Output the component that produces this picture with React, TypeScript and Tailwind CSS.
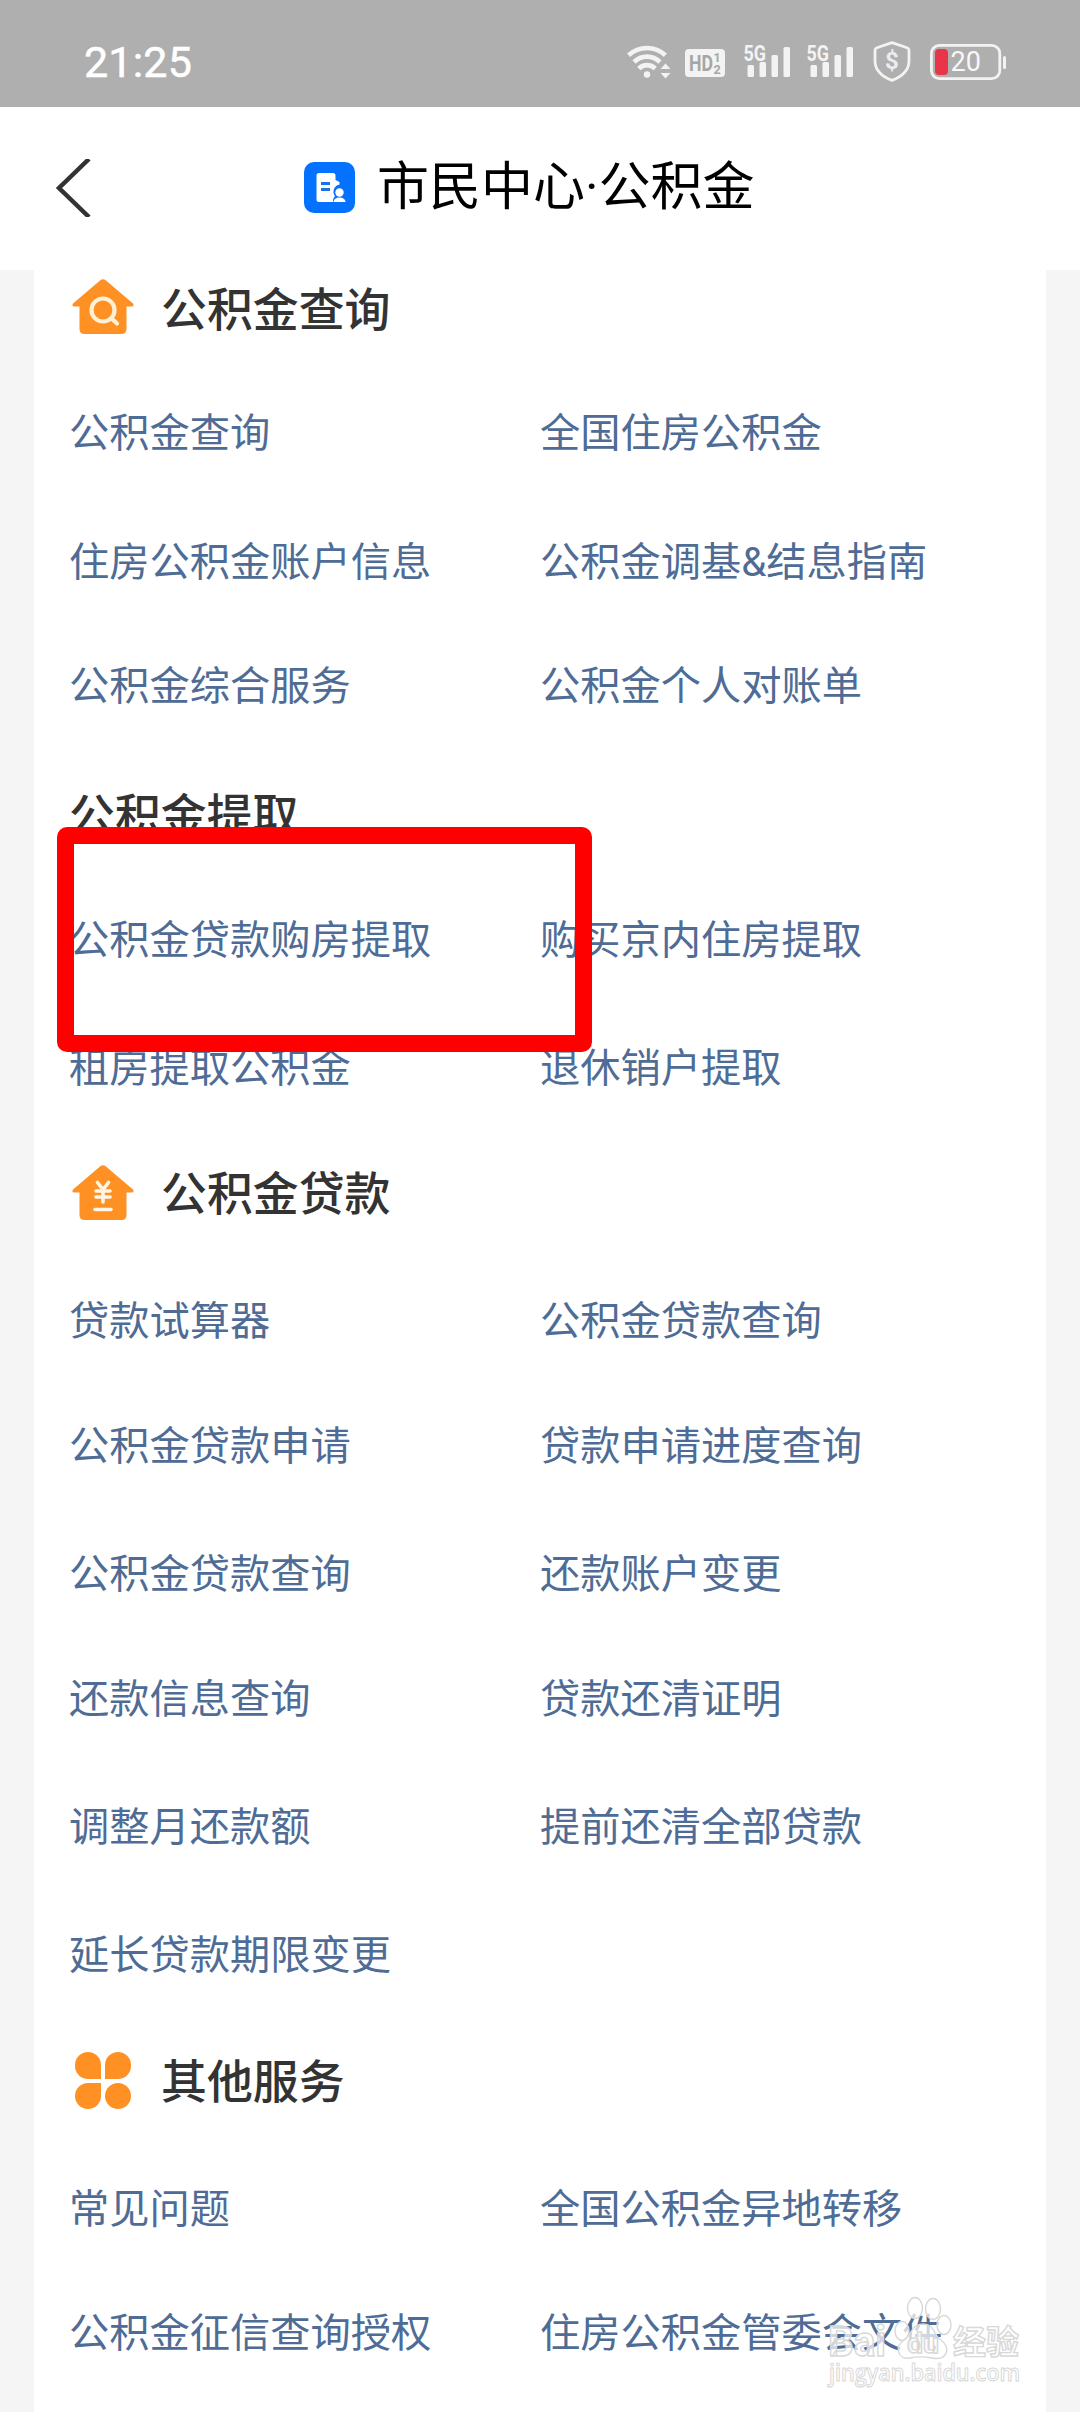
import type { ReactNode } from 'react'

type Row = {
  gap: string
  left: string
  right?: string
}

type SectionProps = {
  title: string
  gap: string
  icon?: ReactNode
  rows: Row[]
}

const queryRows: Row[] = [
  { gap: 'mt-[63px]', left: '公积金查询', right: '全国住房公积金' },
  { gap: 'mt-[69px]', left: '住房公积金账户信息', right: '公积金调基&结息指南' },
  { gap: 'mt-[64px]', left: '公积金综合服务', right: '公积金个人对账单' },
]

const withdrawRows: Row[] = [
  { gap: 'mt-[64px]', left: '公积金贷款购房提取', right: '购买京内住房提取' },
  { gap: 'mt-[68px]', left: '租房提取公积金', right: '退休销户提取' },
]

const loanRows: Row[] = [
  { gap: 'mt-[67px]', left: '贷款试算器', right: '公积金贷款查询' },
  { gap: 'mt-[65px]', left: '公积金贷款申请', right: '贷款申请进度查询' },
  { gap: 'mt-[68px]', left: '公积金贷款查询', right: '还款账户变更' },
  { gap: 'mt-[65px]', left: '还款信息查询', right: '贷款还清证明' },
  { gap: 'mt-[68px]', left: '调整月还款额', right: '提前还清全部贷款' },
  { gap: 'mt-[68px]', left: '延长贷款期限变更' },
]

const otherRows: Row[] = [
  { gap: 'mt-[67px]', left: '常见问题', right: '全国公积金异地转移' },
  { gap: 'mt-[64px]', left: '公积金征信查询授权', right: '住房公积金管委会文件' },
]

const HOUSE = 'M28 1.5 Q31 -1 34 1.5 L61 24.5 Q62.5 27.5 60 27.5 H54.5 V50 Q54.5 55 49.5 55 H12.5 Q7.5 55 7.5 50 V27.5 H2 Q-0.5 27.5 1 24.5 Z'

function HouseSearchIcon() {
  return (
    <svg className="-mt-[4px]" width="62" height="55" viewBox="0 0 62 55" fill="none">
      <path d={HOUSE} fill="#ff9124" />
      <circle cx="31" cy="31" r="11.5" stroke="#fff1d6" strokeWidth="4.2" />
      <path d="M39.5 39.5 L45 44.5" stroke="#fff1d6" strokeWidth="4.2" strokeLinecap="round" />
    </svg>
  )
}

function HouseYuanIcon() {
  return (
    <svg className="mt-[1px]" width="62" height="55" viewBox="0 0 62 55" fill="none">
      <path d={HOUSE} fill="#ff9124" />
      <g stroke="#fff6e6" strokeWidth="3.6" strokeLinecap="round">
        <path d="M25.5 17.5 L31 24.5 L36.5 17.5" />
        <path d="M24 26 H38 M24 32 H38 M31 25 V37" />
        <path d="M23 44.5 H39" />
      </g>
    </svg>
  )
}

function CloverIcon() {
  return (
    <div className="grid grid-cols-2 gap-1 mx-[3px] mt-[1px]">
      <div className="w-[26px] h-[26.5px] bg-[#ff9124] rounded-full rounded-br-[2px]"></div>
      <div className="w-[26px] h-[26.5px] bg-[#ff9124] rounded-full rounded-bl-[2px]"></div>
      <div className="w-[26px] h-[26.5px] bg-[#ff9124] rounded-full rounded-tr-[2px]"></div>
      <div className="w-[26px] h-[26.5px] bg-[#ff9124] rounded-full"></div>
    </div>
  )
}

function SignalIcon() {
  return (
    <svg className="overflow-visible" width="47" height="34" viewBox="0 0 47 34" fill="#f3f3f3">
      <text x="-0.5" y="16.5" fontSize="22" fontWeight="700" textLength="22.5" lengthAdjust="spacingAndGlyphs">
        5G
      </text>
      <rect x="3.5" y="21" width="6.5" height="12" rx="1.5" />
      <rect x="15.5" y="18" width="6.5" height="15" rx="1.5" />
      <rect x="27.5" y="11" width="6.5" height="22" rx="1.5" />
      <rect x="39.5" y="3" width="6.5" height="30" rx="1.5" />
    </svg>
  )
}

function StatusBar() {
  return (
    <div className="h-[107px] bg-[#afafaf] flex items-start justify-between pl-[84px] pr-[74px]">
      <span className="mt-[37px] text-[43px] leading-[50px] tracking-[0.2px] text-white [-webkit-text-stroke:0.5px_white]">21:25</span>
      <div className="flex items-start">
        <svg className="mt-[43px]" width="46" height="37" viewBox="0 0 46 37" fill="none">
          <g stroke="#f3f3f3" strokeWidth="4.6">
            <path d="M2.6 12.2 A27 27 0 0 1 39.4 12.2" />
            <path d="M8 19 A18.5 18.5 0 0 1 34 19" />
            <path d="M12.8 25.6 A11.5 11.5 0 0 1 29.2 25.6" />
          </g>
          <circle cx="21" cy="31.5" r="3.2" fill="#f3f3f3" />
          <path d="M39.5 20.5 L44.5 26 H34.5 Z M39.5 35.5 L34.5 30 H44.5 Z" fill="#f3f3f3" />
        </svg>
        <svg className="mt-[49px] ml-[13px]" width="40" height="28" viewBox="0 0 40 28">
          <rect width="40" height="28" rx="4" fill="#f3f3f3" />
          <g fill="#a6a6a6" fontWeight="700">
            <text x="4" y="22" fontSize="22" textLength="24" lengthAdjust="spacingAndGlyphs">HD</text>
            <text x="28.5" y="13" fontSize="12.5">1</text>
            <text x="28.5" y="24.5" fontSize="12.5">2</text>
          </g>
        </svg>
        <div className="mt-[44px] ml-[19px] flex gap-[16px]">
          <SignalIcon />
          <SignalIcon />
        </div>
        <svg className="mt-[41px] ml-[19px]" width="38" height="41" viewBox="0 0 38 41">
          <path
            d="M19 1.6 L34 6.8 Q36 7.6 36 9.6 V20 C36 29 29 35.5 19 39.4 C9 35.5 2 29 2 20 V9.6 Q2 7.6 4 6.8 Z"
            fill="none"
            stroke="#f3f3f3"
            strokeWidth="2.8"
            strokeLinejoin="round"
          />
          <text x="19" y="28" fontSize="24" fontWeight="700" textAnchor="middle" fill="#ececec">$</text>
        </svg>
        <svg className="mt-[44px] ml-[19px]" width="76" height="36" viewBox="0 0 76 36">
          <rect x="1.4" y="1.4" width="68.4" height="33.2" rx="8" fill="none" stroke="#f3f3f3" strokeWidth="2.8" />
          <rect x="5" y="5" width="13" height="26" rx="4" fill="#ea3548" />
          <rect x="73" y="12" width="3" height="13" rx="1.5" fill="#f3f3f3" />
          <text x="20.5" y="27" fontSize="27" fill="#f7f7f7">20</text>
        </svg>
      </div>
    </div>
  )
}

function Header() {
  return (
    <header className="h-[163px] bg-white flex items-center">
      <svg className="ml-[55px] -mt-[2px]" width="37" height="58" viewBox="0 0 37 58" fill="none">
        <path d="M34 0 L4 29 L34 58" stroke="#333" strokeWidth="4.5" />
      </svg>
      <svg className="ml-[211.5px] -mt-[2px]" width="51" height="51" viewBox="0 0 51 51">
        <rect width="51" height="51" rx="10" fill="#0571ff" />
        <path
          d="M15 11 H29 Q31.5 11 31.5 13.5 V18 L35.5 20 V22.5 Q29 24 29.5 31 Q30 33 31 34 Q29 36 29 40 H15 Q12.5 40 12.5 37.5 V13.5 Q12.5 11 15 11 Z"
          fill="#fff"
        />
        <path d="M17 21.5 H26 M17 27.5 H26" stroke="#1c72e0" strokeWidth="2.8" />
        <circle cx="35.5" cy="30.5" r="4.2" fill="#fff" />
        <path d="M29.5 40 Q30 35.5 35.5 35.5 Q41 35.5 41.5 40 Z" fill="#fff" />
      </svg>
      <h1 className="ml-[22.5px] -mt-[2px] text-[52px] leading-[60px] text-black">市民中心·公积金</h1>
    </header>
  )
}

function Section({ title, gap, icon, rows }: SectionProps) {
  return (
    <section className={gap}>
      <div className="h-[60px] flex items-center">
        {icon && <div className="w-[62px] ml-[3px] mr-[27px]">{icon}</div>}
        <h2 className="pt-[3px] text-[45.9px] leading-[60px] font-medium text-[#333]">{title}</h2>
      </div>
      {rows.map((row) => (
        <div key={row.left} className={`grid grid-cols-2 h-[60px] text-[40.25px] leading-[65px] text-[#4e6c95] ${row.gap}`}>
          <a>{row.left}</a>
          <a>{row.right}</a>
        </div>
      ))}
    </section>
  )
}

function Watermark() {
  return (
    <svg className="absolute left-[820px] top-[2290px]" width="210" height="110" viewBox="0 0 210 110">
      <g fill="#fff" fillOpacity="0.72" stroke="#d8d8d8" strokeWidth="1.4" fontWeight="700">
        <text x="8" y="66" fontSize="42" textLength="58" lengthAdjust="spacingAndGlyphs">Bai</text>
        <ellipse cx="82" cy="41" rx="7" ry="9.5" />
        <ellipse cx="95" cy="18" rx="7.5" ry="10.5" />
        <ellipse cx="113" cy="19" rx="7.5" ry="10.5" />
        <ellipse cx="124" cy="35" rx="7" ry="9.5" />
        <path d="M103 34 C91 34 92 45 84 50 C74 57 78 70 90 68 C98 66 106 67 112 68 C128 71 131 57 121 50 C113 45 115 34 103 34 Z" />
        <text x="87" y="63" fontSize="27" textLength="32" lengthAdjust="spacingAndGlyphs">du</text>
        <text x="133" y="64" fontSize="33" textLength="66">经验</text>
        <text
          className="font-['Open_Sans',sans-serif]"
          x="9"
          y="91"
          fontSize="23"
          fontWeight="600"
          strokeWidth="1"
          textLength="191"
          lengthAdjust="spacingAndGlyphs"
        >
          jingyan.baidu.com
        </text>
      </g>
    </svg>
  )
}

function App() {
  return (
    <div className="relative w-[1080px] h-[2412px] overflow-hidden bg-[#f5f5f5] font-[Roboto,'Noto_Sans_CJK_SC',sans-serif]">
      <StatusBar />
      <Header />
      <main className="mx-[34px] h-[2142px] px-[35px] bg-white flow-root">
        <Section title="公积金查询" gap="mt-[8px]" icon={<HouseSearchIcon />} rows={queryRows} />
        <Section title="公积金提取" gap="mt-[70px]" rows={withdrawRows} />
        <Section title="公积金贷款" gap="mt-[66px]" icon={<HouseYuanIcon />} rows={loanRows} />
        <Section title="其他服务" gap="mt-[67px]" icon={<CloverIcon />} rows={otherRows} />
      </main>

      {/* highlighted entry */}
      <div className="absolute left-[57px] top-[827px] w-[535px] h-[225px] border-[17px] border-[#ff0000] rounded-[10px]"></div>
      <Watermark />
    </div>
  )
}

export default App
